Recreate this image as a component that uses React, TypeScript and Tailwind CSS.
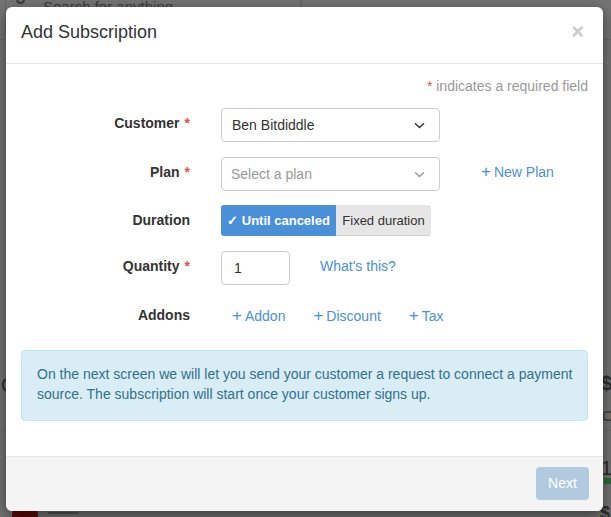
import React from "react";

const FONT = { fontFamily: '"Liberation Sans", Arial, sans-serif' };

function Chevron({ light }: { light?: boolean }) {
  return (
    <svg width="11" height="7" viewBox="0 0 11 7" className="shrink-0">
      <path
        d="M1 1.2 L5.5 5.5 L10 1.2"
        fill="none"
        stroke={light ? "#9a9a9a" : "#333"}
        strokeWidth="1.4"
      />
    </svg>
  );
}

function Label({ text, required, centered }: { text: string; required?: boolean; centered?: boolean }) {
  return (
    <div
      className={
        centered
          ? "w-[169px] shrink-0 text-right text-[14px] font-bold text-[#333]"
          : "w-[169px] shrink-0 pb-[4px] text-right text-[14px] font-bold text-[#333]"
      }
    >
      {text}
      {required && <span className="ml-[5px] text-[#d9534f]">*</span>}
    </div>
  );
}

function PlusLink({ text }: { text: string }) {
  return (
    <span className="text-[14px] text-[#4a90d9]">
      <span className="mr-[3px] text-[17px] leading-none">+</span>
      {text}
    </span>
  );
}

export default function App() {
  return (
    <div className="relative h-[517px] w-[611px] overflow-hidden bg-[#747474]" style={FONT}>
      {/* page behind the overlay */}
      <div className="absolute left-[5px] top-[-12px] h-[50px] w-[296px] rounded-[4px] border border-[#666]">
        <div className="absolute left-[10px] top-[6px] h-[9px] w-[9px] rounded-full border-2 border-[#3a3a3a]" />
        <div className="absolute left-[37px] top-[7px] text-[15px] text-[#3d3d3d]">Search for anything</div>
      </div>
      <div className="absolute left-[301px] top-0 h-[40px] w-px bg-[#666]" />
      <div className="absolute left-0 top-[39px] h-px w-[611px] bg-[#6a6a6a]" />
      <div className="absolute left-0 top-[430px] h-px w-[611px] bg-[#6a6a6a]" />
      <div className="absolute left-[1px] top-[370px] text-[20px] text-[#2e2e2e]">C</div>
      <div className="absolute left-[601px] top-[368px] text-[20px] font-bold text-[#2e2e2e]">$5</div>
      <div className="absolute left-[602px] top-[405px] text-[15px] text-[#3d3d3d]">OT</div>
      <div className="absolute left-[601px] top-[453px] text-[20px] text-[#2e2e2e]">1</div>
      <div className="absolute left-[604px] top-[478px] h-[6px] w-[7px] bg-[#2f6a3a]" />
      <div className="absolute left-[600px] top-[500px] text-[18px] font-bold text-[#2e2e2e]">$2</div>
      <div className="absolute left-[12px] top-[502px] h-[26px] w-[26px] rounded-full bg-[#5e0a0a]" />
      <div className="absolute left-[48px] top-[512px] h-[2px] w-[30px] bg-[#555]" />

      {/* modal */}
      <div className="relative ml-[6px] mt-[7px] flex h-[504px] w-[597px] flex-col overflow-hidden rounded-[6px] bg-white shadow-[0_5px_15px_rgba(0,0,0,0.5)]">
        <div className="flex h-[57px] shrink-0 items-center justify-between border-b border-[#e5e5e5] px-[15px] pb-[6px]">
          <h4 className="text-[18px] text-[#333]">Add Subscription</h4>
          <span className="mr-[4px] text-[22px] font-bold leading-none text-[#cbcbcb]">×</span>
        </div>

        <div className="flex flex-1 flex-col px-[15px] pt-[12px]">
          <div className="h-[20px] text-right text-[14px] leading-[20px] text-[#999]">
            <span className="text-[#d9534f]">*</span> indicates a required field
          </div>

          <div className="mt-[12px] flex h-[34px] items-center">
            <Label text="Customer" required />
            <div className="ml-[31px] flex h-[34px] w-[219px] items-center justify-between rounded-[4px] border border-[#ccc] pl-[10px] pr-[14px] text-[14px] text-[#333]">
              Ben Bitdiddle
              <Chevron />
            </div>
          </div>

          <div className="mt-[15px] flex h-[34px] items-center">
            <Label text="Plan" required />
            <div className="ml-[31px] flex h-[34px] w-[219px] items-center justify-between rounded-[4px] border border-[#ccc] pl-[9px] pr-[14px] text-[14px] text-[#999]">
              Select a plan
              <Chevron light />
            </div>
            <div className="ml-[41px] pb-[4px]">
              <PlusLink text="New Plan" />
            </div>
          </div>

          <div className="mt-[14px] flex h-[31px] items-center">
            <Label text="Duration" centered />
            <div className="ml-[31px] flex h-[31px] overflow-hidden rounded-[3px] text-[13px]">
              <div className="flex w-[115px] items-center justify-center bg-[#4a90d9] font-bold text-white">
                ✓ Until canceled
              </div>
              <div className="flex w-[95px] items-center justify-center bg-[#e6e6e6] text-[#333] shadow-[inset_0_-1px_0_#d0d0d0]">
                Fixed duration
              </div>
            </div>
          </div>

          <div className="mt-[15px] flex h-[34px] items-center">
            <Label text="Quantity" required />
            <div className="ml-[31px] flex h-[34px] w-[69px] items-center rounded-[4px] border border-[#ccc] pl-[12px] text-[14px] text-[#333]">
              1
            </div>
            <span className="ml-[30px] pb-[4px] text-[14px] text-[#4a90d9]">What's this?</span>
          </div>

          <div className="mt-[15px] flex h-[34px] items-center">
            <Label text="Addons" />
            <div className="ml-[42px] flex gap-[28px] pb-[2px]">
              <PlusLink text="Addon" />
              <PlusLink text="Discount" />
              <PlusLink text="Tax" />
            </div>
          </div>

          <div className="mt-[16px] h-[71px] rounded-[4px] border border-[#bce8f1] bg-[#d9edf7] px-[15px] pt-[13px] text-[14px] leading-[20px] text-[#31708f]">
            <p className="whitespace-nowrap">On the next screen we will let you send your customer a request to connect a payment</p>
            <p className="whitespace-nowrap">source. The subscription will start once your customer signs up.</p>
          </div>
        </div>

        <div className="flex h-[55px] shrink-0 justify-end border-t border-[#e5e5e5] bg-[#f4f4f4] pr-[14px] pt-[10px]">
          <button className="h-[33px] w-[53px] rounded-[4px] bg-[#b1cae0] text-[14px] text-white">Next</button>
        </div>
      </div>
    </div>
  );
}
